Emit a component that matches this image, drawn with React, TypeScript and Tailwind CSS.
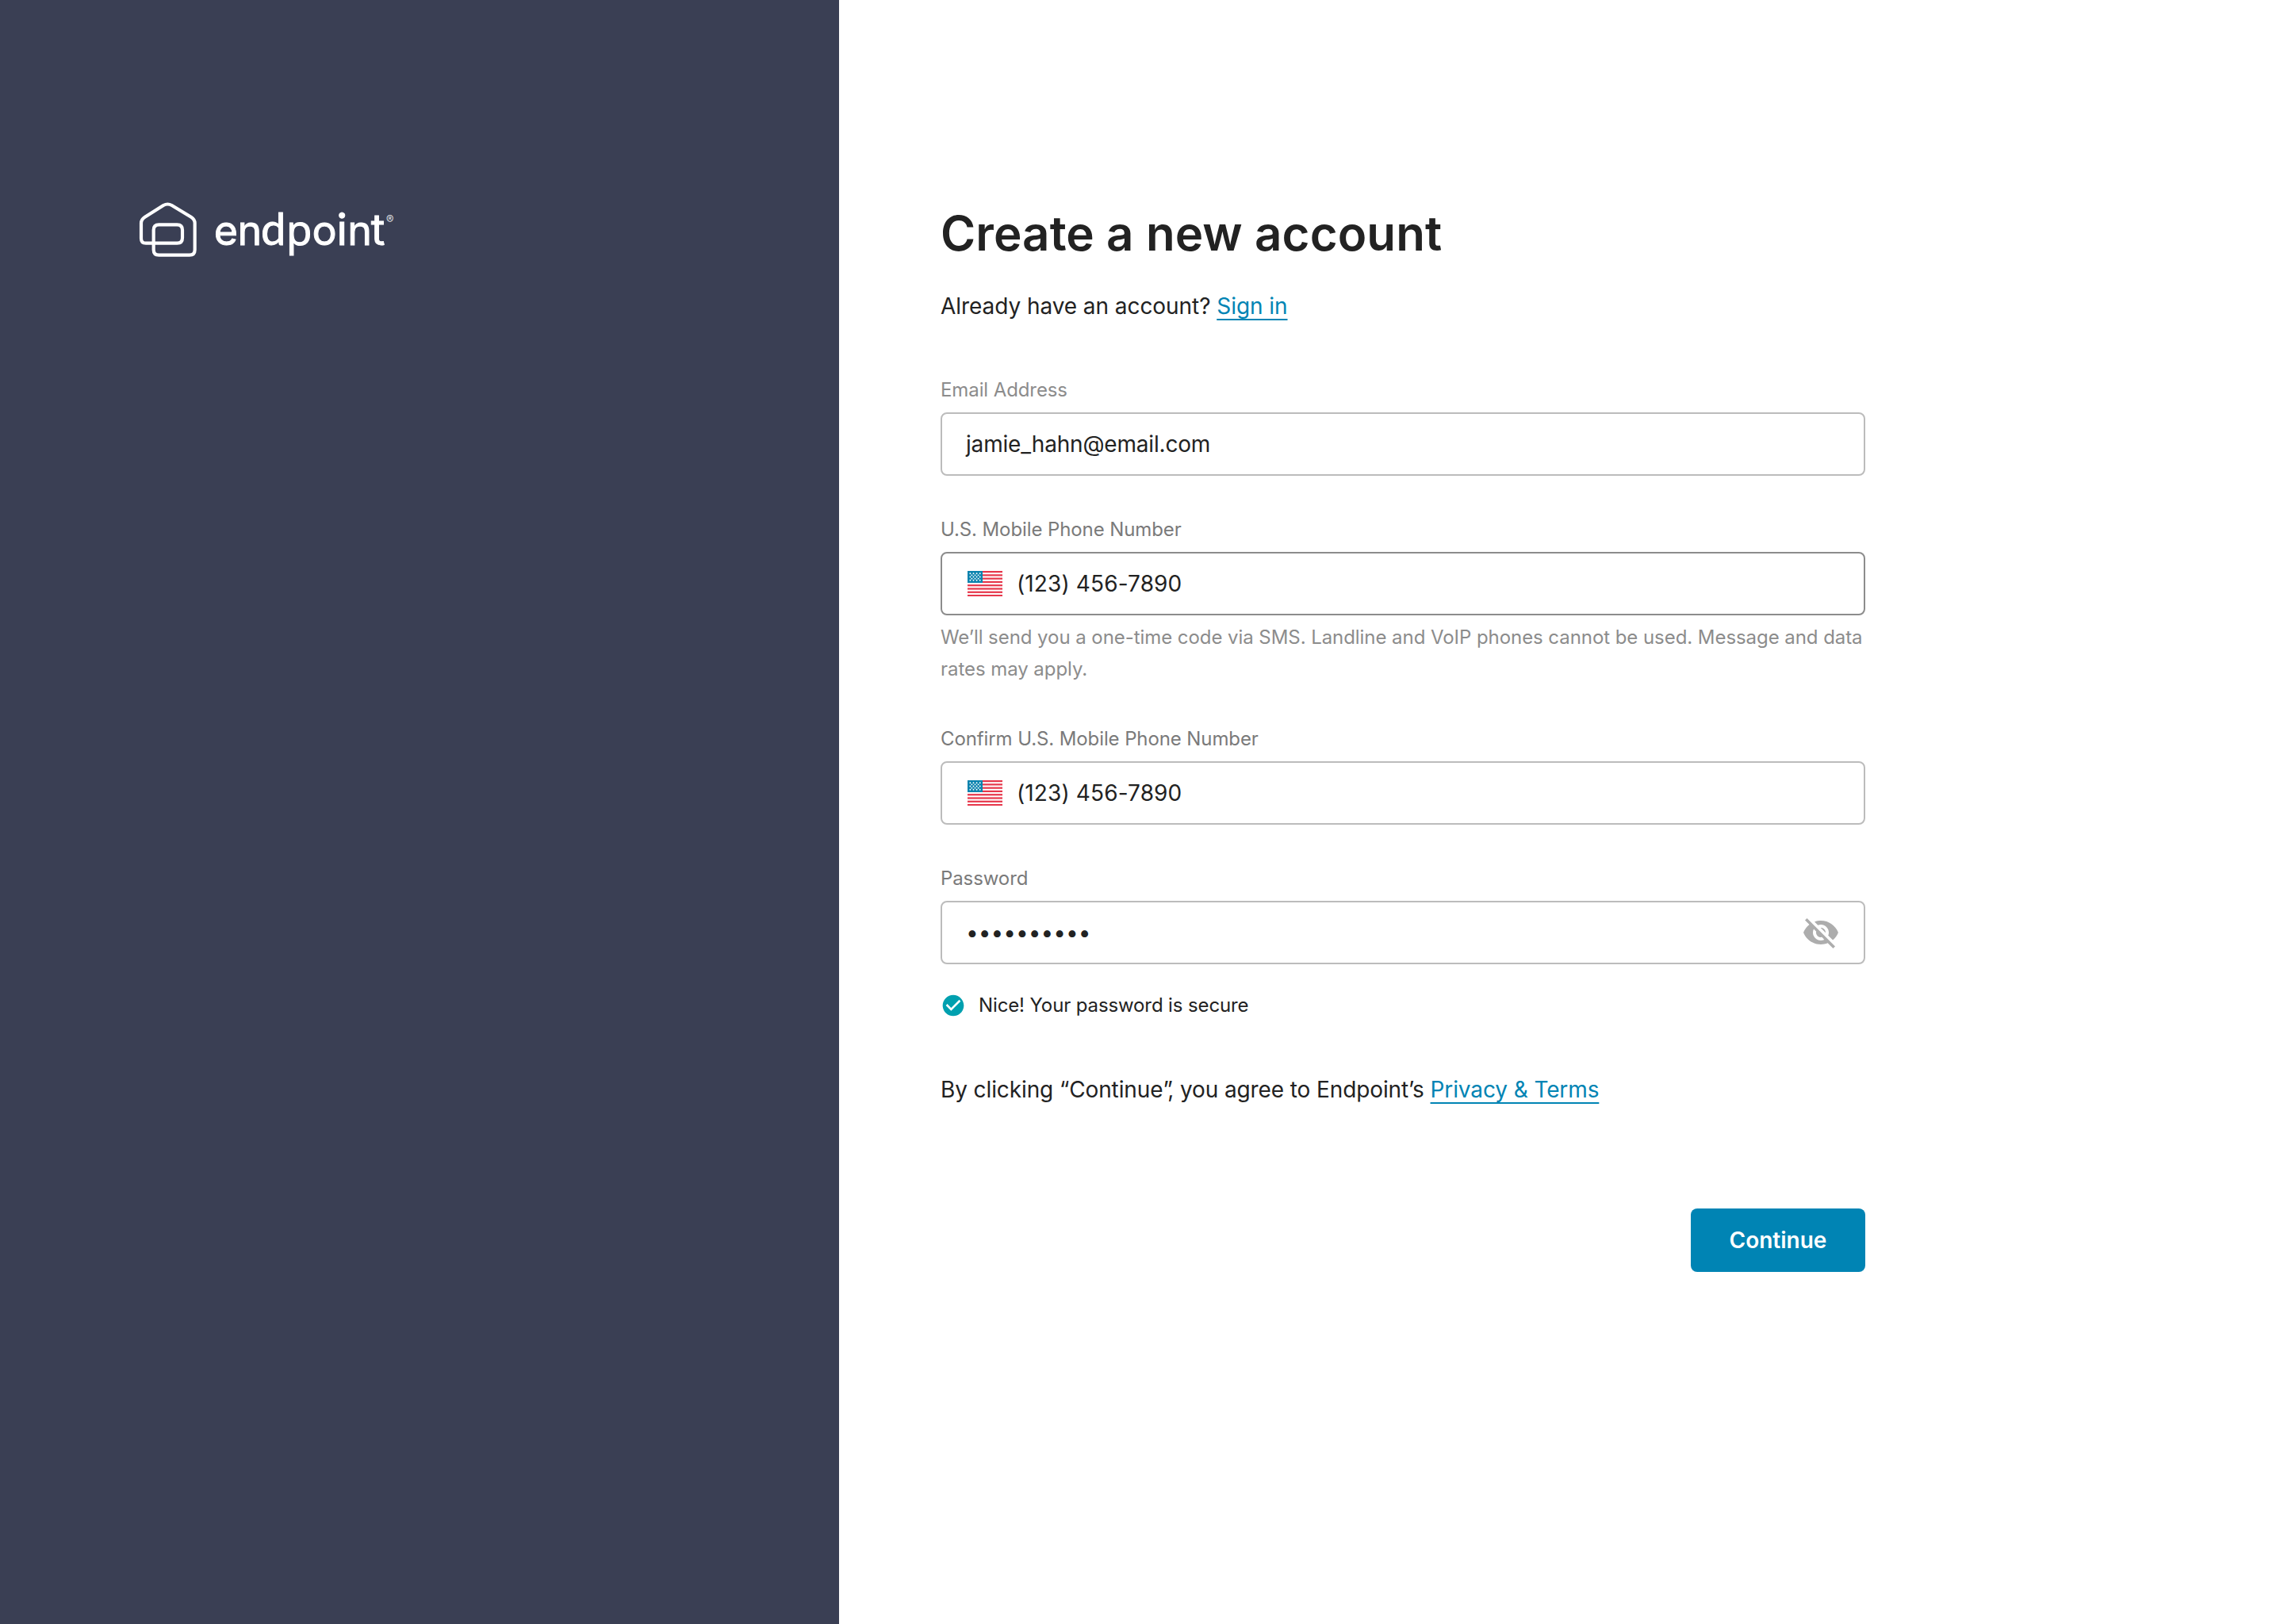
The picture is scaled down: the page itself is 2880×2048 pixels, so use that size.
import React from "react";
import { MdCheckCircle, MdVisibilityOff } from "react-icons/md";

const STARS = [0, 1, 2, 3, 4].flatMap((row) =>
  (row % 2 === 0 ? [3.4, 7.5, 11.6, 15.7] : [5.4, 9.5, 13.6]).map((x) => [x, 3.2 + row * 2.15]),
);

function Flag() {
  return (
    <svg width="44" height="32" viewBox="0 0 44 32" className="ml-0.5 shrink-0">
      <rect width="44" height="32" fill="#fff" />
      {[0, 1, 2, 3, 4, 5, 6, 7].map((i) => (
        <rect key={i} y={i * 4.28} width="44" height="2.2" fill="#e6374b" />
      ))}
      <rect width="19" height="15" fill="#0b83ae" />
      {STARS.map(([x, y], i) => (
        <circle key={i} cx={x} cy={y} r="0.95" fill="#fff" />
      ))}
    </svg>
  );
}

function Logo() {
  return (
    <svg width="360" height="100" viewBox="0 0 360 100" className="block" role="img" aria-label="endpoint">
      <path
        transform="scale(0.33333)"
        d="M138 57 L68 101 Q54 110 54 124 V182 Q54 200 72 200 H190 Q210 200 210 180 V150 Q210 130 190 130 H121 Q101 130 101 150 V225 Q101 245 121 245 H237 Q257 245 257 225 V124 Q257 110 243 101 L170 57 Q154 48 138 57Z"
        fill="none"
        stroke="#fff"
        strokeWidth="12.5"
      />
      <text y="69" fill="#fff" stroke="#fff" strokeWidth="0.9" fontSize="52" fontFamily="Inter, sans-serif">
        <tspan x="109.7">e</tspan>
        <tspan x="139.6">n</tspan>
        <tspan x="169.1" fontFamily="Lato, sans-serif" fontSize="56">d</tspan>
        <tspan x="200.9" fontFamily="'Open Sans', sans-serif" fontSize="53" strokeWidth="1.2">p</tspan>
        <tspan x="233.4">o</tspan>
        <tspan x="264.6" fontFamily="Lato, sans-serif" fontSize="56">i</tspan>
        <tspan x="278.3">n</tspan>
        <tspan x="307.8" fontSize="54">t</tspan>
      </text>
      <text x="327" y="41.6" fill="#fff" fontSize="14" fontWeight="300" fontFamily="Inter, sans-serif">
        ®
      </text>
    </svg>
  );
}

function Field({ label, tone, border, children }: { label: string; tone: string; border: string; children: React.ReactNode }) {
  return (
    <div>
      <div className={`h-10 text-[24px] leading-10 tracking-[-0.1px] ${tone}`}>{label}</div>
      <div className={`mt-2 flex h-20 items-center rounded-lg border-2 ${border} px-[30px] text-[28px] leading-10 text-[#222]`}>
        {children}
      </div>
    </div>
  );
}

const LINK =
  "text-[#0084b4] underline decoration-2 underline-offset-[6px] [text-decoration-skip-ink:none]";

export default function App() {
  return (
    <div className="flex h-[2048px] w-[2880px] bg-white font-['Inter',sans-serif] text-[#222]">
      <aside className="w-[1058px] shrink-0 bg-[#3a3f54] pt-[240px] pl-40">
        <Logo />
      </aside>
      <main className="ml-32 w-[1166px] pt-[254px]">
        <h1 className="h-20 text-[60px] leading-[80px] font-semibold tracking-[0.1px]">Create a new account</h1>
        <p className="mt-8 h-10 text-[28px] leading-10 tracking-[-0.06px]">
          Already have an account? <a className={LINK}>Sign in</a>
        </p>
        <div className="mt-[66px]">
          <Field label="Email Address" tone="text-[#8c8c8c]" border="border-[#bcbcbc]">
            <span className="tracking-[-0.18px]">jamie_hahn@email.com</span>
          </Field>
        </div>
        <div className="mt-12">
          <Field label="U.S. Mobile Phone Number" tone="text-[#7a7a7a]" border="border-[#8c8c8c]">
            <Flag />
            <span className="ml-[18px] tracking-[0.13px]">(123) 456-7890</span>
          </Field>
          <p className="mt-2 h-20 text-[24px] leading-10 tracking-[-0.06px] whitespace-nowrap text-[#8c8c8c]">
            We’ll send you a one-time code via SMS. Landline and VoIP phones cannot be used. Message and data
            <br />
            rates may apply.
          </p>
        </div>
        <div className="mt-12">
          <Field label="Confirm U.S. Mobile Phone Number" tone="text-[#7a7a7a]" border="border-[#bcbcbc]">
            <Flag />
            <span className="ml-[18px] tracking-[0.13px]">(123) 456-7890</span>
          </Field>
        </div>
        <div className="mt-12">
          <Field label="Password" tone="text-[#7a7a7a]" border="border-[#bcbcbc]">
            <span>••••••••••</span>
            <MdVisibilityOff className="ml-auto size-12 text-[#adadad]" />
          </Field>
        </div>
        <div className="mt-8 flex h-10 items-center gap-4 text-[24px] leading-10 tracking-[-0.12px]">
          <MdCheckCircle className="size-8 text-[#00a0af]" />
          <span>Nice! Your password is secure</span>
        </div>
        <p className="mt-[66px] h-10 text-[28px] leading-10 tracking-[-0.11px]">
          By clicking “Continue<span className="tracking-[-6.5px]">”</span>, you agree to Endpoint’s{" "}
          <a className={LINK}>Privacy &amp; Terms</a>
        </p>
        <button className="mt-[130px] ml-auto block h-20 w-[220px] rounded-lg bg-[#0084b4] text-[28px] leading-10 font-semibold text-white">
          Continue
        </button>
      </main>
    </div>
  );
}
